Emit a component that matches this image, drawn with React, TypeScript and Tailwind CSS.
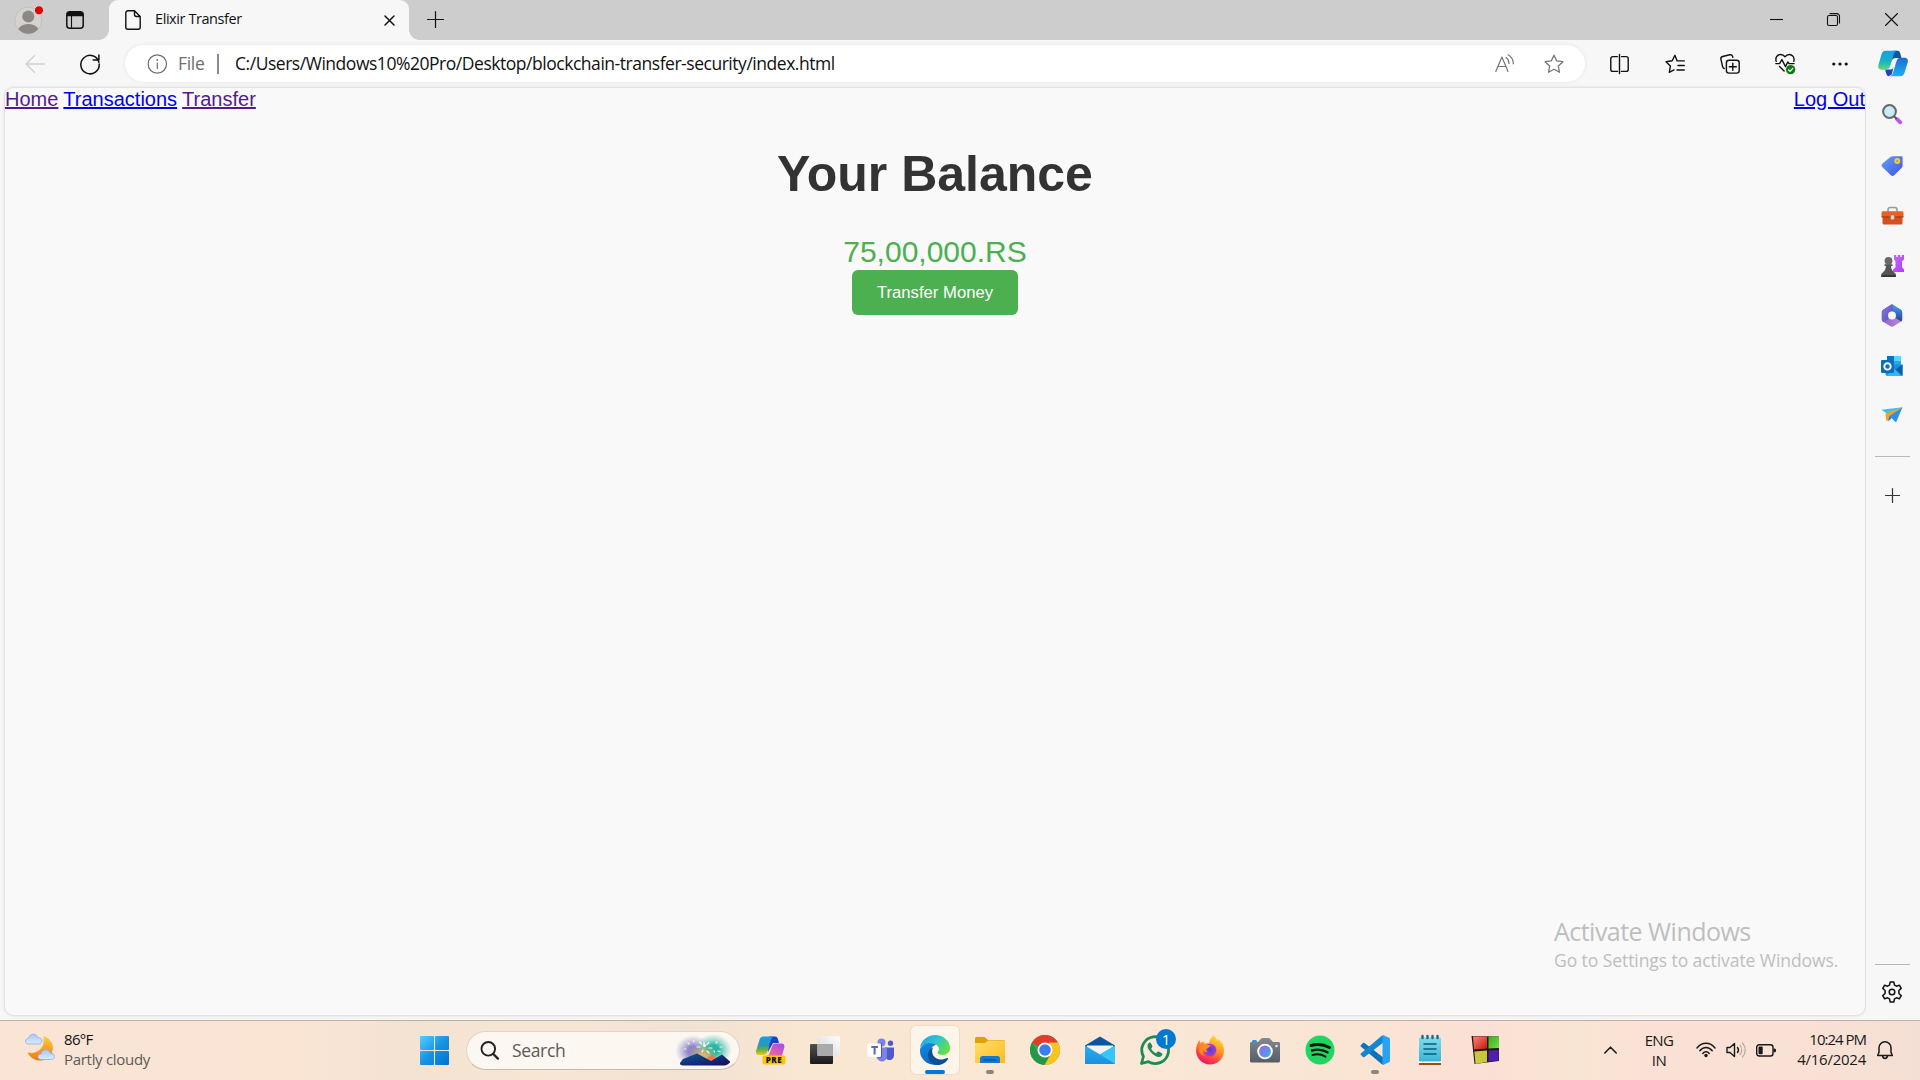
import React from "react";

type IconProps = { w: number; h: number; className?: string; children: React.ReactNode };

const Icon = ({ w, h, className = "", children }: IconProps) => (
  <svg
    width={w}
    height={h}
    viewBox={`0 0 ${w} ${h}`}
    fill="none"
    strokeLinecap="round"
    strokeLinejoin="round"
    className={`block shrink-0 overflow-visible ${className}`}
  >
    {children}
  </svg>
);

const STAR = "M10 1.2l2.7 5.7 6.2.8-4.6 4.3 1.2 6.3L10 15.2l-5.5 3.1L5.7 12 1.1 7.7l6.2-.8z";

/* ---------- Browser chrome ---------- */

const TabStrip = () => (
  <div className="flex h-[40px] bg-[#cdcdcd]">
    <div className="flex w-[109px] items-center rounded-br-[10px] pl-[14px]">
      <Icon w={29} h={29}>
        <defs>
          <clipPath id="avatar"><circle cx="14.3" cy="14.5" r="13.2" /></clipPath>
        </defs>
        <circle cx="14.3" cy="14.5" r="13.4" fill="#d5d3d0" stroke="#bdbbb8" strokeWidth="0.8" />
        <g clipPath="url(#avatar)" fill="#8b8885">
          <circle cx="14.3" cy="10.6" r="6" />
          <ellipse cx="14.3" cy="25" rx="10.5" ry="7" />
        </g>
        <circle cx="25" cy="4.3" r="4.6" fill="#e60000" stroke="#dedede" />
      </Icon>
      <Icon w={18} h={18} className="ml-[23px]">
        <rect x="0.8" y="0.8" width="16.4" height="16.4" rx="3" stroke="#111" strokeWidth="1.5" />
        <path d="M1 5.2V3a2 2 0 012-2h12a2 2 0 012 2v2.2z" fill="#111" />
        <path d="M5.5 5v12" stroke="#111" strokeWidth="1.1" />
      </Icon>
    </div>
    <div className="relative flex h-[40px] w-[300px] items-center rounded-t-[9px] bg-[#f7f7f7] pl-[16px]">
      <div className="absolute bottom-0 -left-[10px] h-[10px] w-[10px] bg-[radial-gradient(circle_at_0_0,#cdcdcd_9.5px,#f7f7f7_10px)]" />
      <div className="absolute -right-[10px] bottom-0 h-[10px] w-[10px] bg-[radial-gradient(circle_at_100%_0,#cdcdcd_9.5px,#f7f7f7_10px)]" />
      <Icon w={16} h={20}>
        <path d="M9.5 0.8H2.8a2 2 0 00-2 2v14.4a2 2 0 002 2h10.4a2 2 0 002-2V6.5zM9.5 1v3.5a2 2 0 002 2H15" stroke="#111" strokeWidth="1.4" />
      </Icon>
      <span className="mb-[2px] ml-[14px] w-[229px] text-[14.5px] leading-[20px] tracking-[-0.42px] text-[#111]">Elixir Transfer</span>
      <Icon w={11} h={11}>
        <path d="M1 1l9 9M10 1l-9 9" stroke="#111" strokeWidth="1.5" />
      </Icon>
    </div>
    <div className="flex flex-1 items-center pb-px pl-[18px]">
      <Icon w={17} h={17}>
        <path d="M8.5 0.5v16M0.5 8.5h16" stroke="#111" strokeWidth="1.2" />
      </Icon>
    </div>
    <div className="flex items-center pr-[22px] pb-px">
      <Icon w={13} h={13} className="mr-[44px]">
        <path d="M0 6.5h13" stroke="#111" strokeWidth="1.1" strokeLinecap="butt" />
      </Icon>
      <Icon w={13} h={13} className="mr-[45px]">
        <rect x="0.5" y="2.5" width="10" height="10" rx="1.5" stroke="#111" strokeWidth="1.1" />
        <path d="M3 .6h6.8a2.7 2.7 0 012.7 2.7V10" stroke="#111" strokeWidth="1.1" />
      </Icon>
      <Icon w={13} h={13}>
        <path d="M0.5 0.5l12 12M12.5 0.5l-12 12" stroke="#111" strokeWidth="1.1" />
      </Icon>
    </div>
  </div>
);

const Toolbar = () => (
  <div className="flex h-[47px] items-center bg-[#f7f7f7] pl-[25px]">
    <Icon w={20} h={18}>
      <path d="M9.5 0.8L1 9l8.5 8.2M1.2 9h18.3" stroke="#cfcfcf" strokeWidth="1.3" />
    </Icon>
    <Icon w={20} h={20} className="ml-[35px]">
      <path d="M18.9 8.2A9.2 9.2 0 1019.2 10M13.2 6h5.7V1" stroke="#111" strokeWidth="1.5" />
    </Icon>
    <div className="ml-[25px] flex h-[37px] w-[1460px] items-center rounded-full bg-white pl-[22px] shadow-[0_0_4px_rgba(0,0,0,0.08)]">
      <Icon w={20} h={20}>
        <circle cx="10.3" cy="10" r="9.2" stroke="#6e6e6e" strokeWidth="1.2" />
        <path d="M10.3 9v5.5" stroke="#6e6e6e" strokeWidth="1.2" />
        <circle cx="10.3" cy="6" r="0.9" fill="#6e6e6e" />
      </Icon>
      <span className="mb-[2px] ml-[11px] w-[39px] text-[17.5px] leading-[24px] tracking-[-0.3px] text-[#6e6e6e]">File</span>
      <div className="h-[20px] w-[2px] bg-[#8a8a8a]" />
      <span className="mb-[2px] ml-[16px] flex-1 whitespace-nowrap text-[17.5px] leading-[24px] tracking-[-0.465px] text-[#111]">
        C:/Users/Windows10%20Pro/Desktop/blockchain-transfer-security/index.html
      </span>
      <Icon w={20} h={19} className="mr-[29px]">
        <path d="M.8 17.5L6.9 3l6.1 14.5M3 12.5h7.8" stroke="#767676" strokeWidth="1.2" />
        <path d="M11 3.5c2 1.3 3 3.3 3 6M13 .8c3.3 1.7 5.3 4.8 5.3 9" stroke="#767676" strokeWidth="1.2" />
      </Icon>
      <Icon w={20} h={20} className="mr-[21px]">
        <path d={STAR} stroke="#767676" strokeWidth="1.3" />
      </Icon>
    </div>
    <Icon w={20} h={20} className="ml-[25px]">
      <path d="M7.5 2.6H2.8a2 2 0 00-2 2v10.8a2 2 0 002 2h4.7M11.5 2.6h4.7a2 2 0 012 2v10.8a2 2 0 01-2 2h-4.7M9.5.5v19" stroke="#111" strokeWidth="1.4" />
    </Icon>
    <Icon w={20} h={20} className="ml-[35px]">
      <path d="M13 6.9L12 6.7 9.9 1.3 7.2 6.7 1 7.7l4.4 4.4-1.1 6.2 4.7-2.4M13 6.9h6.3M13 11.5h6.3M12 16h7.3" stroke="#111" strokeWidth="1.4" />
    </Icon>
    <Icon w={20} h={20} className="ml-[35px]">
      <rect x="6.4" y="6.3" width="12.8" height="12.8" rx="2.6" stroke="#111" strokeWidth="1.4" />
      <path d="M12.8 9.2v7M9.3 12.7h7M4.2 14.5a2.5 2.5 0 01-1.6-1.8L.9 5.2a2.3 2.3 0 011.7-2.7l7.2-1.7a2.4 2.4 0 012.8 1.6l.2.9" stroke="#111" strokeWidth="1.4" />
    </Icon>
    <Icon w={20} h={21} className="ml-[35px]">
      <path d="M1.2 8.3C-.2 4 3 1.3 5.8 1.5c2 0 3.3 1.2 4.2 2.3.9-1.1 2.3-2.3 4.3-2.3 2.8 0 5.7 2.7 4.5 6.8M.8 10.6h3.8l2.3-4 3.6 7 2.3-4.6 1.3 1.6h5M4.5 13.5l4.6 4.5" stroke="#111" strokeWidth="1.4" />
      <circle cx="15.6" cy="16.6" r="4.7" fill="#107c10" />
      <path d="M13.5 16.8l1.5 1.5 2.8-3" stroke="#fff" strokeWidth="1.2" />
    </Icon>
    <Icon w={18} h={6} className="ml-[36px]">
      <g fill="#111">
        <circle cx="2.8" cy="3" r="1.6" /><circle cx="9" cy="3" r="1.6" /><circle cx="15.2" cy="3" r="1.6" />
      </g>
    </Icon>
    <Icon w={30} h={27} className="ml-[29px]">
      <defs>
        <linearGradient id="cpA" x1="0" y1="0" x2="0" y2="1"><stop stopColor="#1b9de2" /><stop offset="0.55" stopColor="#16b3c1" /><stop offset="1" stopColor="#63d57c" /></linearGradient>
        <linearGradient id="cpB" x1="0" y1="0" x2="0" y2="1"><stop stopColor="#2268d1" /><stop offset="1" stopColor="#18b4f5" /></linearGradient>
      </defs>
      <path d="M15 .8h4.500c1.700 0 2.300 1 2.700 2.400L23.500 8H18c-2.500 0-3.500 1-4.300 3z" fill="#0e579a" />
      <path d="M7 19.500h5.500c2 0 2.500-1 3.200-3l-2 8-3 1.700c-1.200-.2-2-1.200-2.400-2.500z" fill="#1d45c4" />
      <path d="M7.500.8H19c-1.800.3-2.700 1.800-3.300 3.700l-3.400 11.300C11.500 18.300 10 19.700 7.800 19.700H3.500C.8 19.700-.3 17.500.4 15L3.500 4.200C4.200 2 5.400.8 7.500.8z" fill="url(#cpA)" />
      <path d="M22.500 26.200H11.800c1.800-.3 2.700-1.800 3.300-3.700l3.200-10.700c.8-2.500 2.200-4 4.500-4h3.800c2.700 0 3.800 2.200 3.100 4.800l-3.200 10.200c-.7 2.200-1.900 3.400-4 3.400z" fill="url(#cpB)" />
    </Icon>
  </div>
);

/* ---------- Web page ---------- */

const Page = () => (
  <main className="ml-[4px] flex w-[1862px] flex-col overflow-hidden rounded-[10px] border border-[#e3e3e3] bg-[#f9f9f9] font-['Liberation_Sans',sans-serif] shadow-[0_0_3px_rgba(0,0,0,0.1)]">
    <nav className="flex h-[23px] justify-between text-[20px] leading-[23px]">
      <div className="flex gap-[5px]">
        <a className="text-[#551a8b] underline">Home</a>
        <a className="text-[#0000ee] underline">Transactions</a>
        <a className="text-[#551a8b] underline">Transfer</a>
      </div>
      <a className="text-[#0000ee] underline">Log Out</a>
    </nav>
    <div className="flex flex-col items-center pt-[35px]">
      <h1 className="text-[50px] leading-[57px] font-bold text-[#333]">Your Balance</h1>
      <p className="mt-[32px] text-[30px] leading-[34px] text-[#4caf50]">75,00,000.RS</p>
      <button className="mt-px h-[45px] w-[166px] rounded-[6px] bg-[#4caf50] text-[16.67px] text-white">Transfer Money</button>
    </div>
    <div className="mt-auto flex flex-col pb-[43px] pl-[1549px] font-['Open_Sans',sans-serif] whitespace-nowrap text-[#bebebe]">
      <span className="text-[25px] leading-[34px] tracking-[-0.530px]">Activate Windows</span>
      <span className="text-[17.5px] leading-[24px] tracking-[-0.070px]">Go to Settings to activate Windows.</span>
    </div>
  </main>
);

/* ---------- Edge sidebar ---------- */

const Cell = ({ children, className = "" }: { children: React.ReactNode; className?: string }) => (
  <div className={`flex h-[50px] w-full items-center justify-center ${className}`}>{children}</div>
);

const Sidebar = () => (
  <aside className="flex flex-1 flex-col items-center bg-[#f7f7f7] pt-[3px] pr-[2px]">
    <Cell className="pb-[2px]">
      <Icon w={20} h={20}>
        <path d="M15 15.2l3.300 3.100" stroke="#c94ff5" strokeWidth="3.800" />
        <path d="M12 12.2l2.2 2.2" stroke="#555" strokeWidth="2" />
        <circle cx="7.5" cy="7.5" r="6.4" fill="#c9ebfa" stroke="#686868" strokeWidth="2" />
      </Icon>
    </Cell>
    <Cell className="pt-px">
      <Icon w={22} h={22}>
        <defs><linearGradient id="tag" x1="0" y1="0" x2="1" y2="1"><stop stopColor="#64a5f5" /><stop offset="1" stopColor="#3f4fe8" /></linearGradient></defs>
        <path d="M12 1.3h8.3c.8 0 1.3.5 1.3 1.3v8.2c0 .8-.3 1.4-.8 1.9l-7.6 7.5c-1 1-2.3 1-3.3 0L1.3 12c-1-1-1-2.2 0-3.2l7.8-6.5c.8-.7 1.7-1 2.9-1z" fill="url(#tag)" />
        <circle cx="16.300" cy="6" r="2" fill="#8d90c0" stroke="#fbcc26" strokeWidth="1.900" />
      </Icon>
    </Cell>
    <Cell className="pt-[2px]">
      <Icon w={23} h={20}>
        <path d="M7 6V3.8C7 2.4 8 1.5 9.3 1.5h4.5c1.3 0 2.2.9 2.2 2.3V6" stroke="#999" strokeWidth="1.6" />
        <rect x="1.5" y="9" width="20" height="9.5" rx="1.5" fill="#d4501e" />
        <path d="M2 5.3h19c.8 0 1.5.7 1.5 1.5V11H.5V6.800c0-.8.7-1.500 1.500-1.500z" fill="#e4622a" />
        <path d="M.5 10.500h22v.9H.5z" fill="#8f2c11" />
        <rect x="9.700" y="9.200" width="3.600" height="4.200" rx="1" fill="#d2d2d2" />
      </Icon>
    </Cell>
    <Cell className="pt-px">
      <Icon w={23} h={24}>
        <defs><linearGradient id="rook" x1="0" y1="0" x2="1" y2="1"><stop stopColor="#c46cff" /><stop offset="1" stopColor="#b23af5" /></linearGradient></defs>
        <path d="M13 1h2.200v2h1.500V1h2.600v2h1.500V1H23v4.500l-2 1.700v6l2 2.300V18H12v-2.500l2.500-2.300v-6L13 5.500z" fill="url(#rook)" />
        <circle cx="7.500" cy="6.800" r="3.900" fill="#6a6a6a" />
        <path d="M3.500 10.300h8v1.800H10c.2 2.700 1 4.700 3 6.200l1.800 1.700v3H.3v-3L2 18.300c2-1.500 2.800-3.500 3-6.200H3.500z" fill="#555" />
        <path d="M.3 21h14.500v2H.3z" fill="#383838" />
      </Icon>
    </Cell>
    <Cell>
      <Icon w={22} h={23}>
        <defs>
          <linearGradient id="mA" x1="0" y1="0" x2="1" y2="1"><stop stopColor="#9a72d6" /><stop offset="1" stopColor="#3d55c4" /></linearGradient>
          <linearGradient id="mB" x1="0" y1="0" x2="0" y2="1"><stop stopColor="#41a6ee" /><stop offset="1" stopColor="#2b3e9b" /></linearGradient>
          <linearGradient id="mC" x1="0" y1="0" x2="1" y2="0"><stop stopColor="#8f62c2" /><stop offset="1" stopColor="#b98ae4" /></linearGradient>
        </defs>
        <path d="M11 .4l8.500 5c1.100.7 1.700 1.600 1.700 2.800v7c0 1.200-.6 2.100-1.700 2.800l-7 4.300c-1 .6-2 .6-3 0l-7-4.300C1.400 17.300.8 16.400.8 15.200v-7c0-1.200.6-2.100 1.700-2.800L9.500 1c.5-.3 1-.5 1.500-.6z" fill="url(#mC)" />
        <path d="M9.500 1c1-.6 2-.6 3 0l7 4.400c1.100.7 1.700 1.600 1.700 2.800v7c0 .9-.3 1.600-.9 2.200L14.500 14V9.500L8 5.500z" fill="url(#mB)" />
        <path d="M12 .7c-1-.4-1.700-.2-2.500.3l-7 4.400C1.400 6.100.8 7 .8 8.200v7c0 1.200.6 2.100 1.700 2.800l5-3V9.500L12.500 6z" fill="url(#mA)" />
        <circle cx="11" cy="11.500" r="3.900" fill="#f7f7f7" />
      </Icon>
    </Cell>
    <Cell className="pt-px">
      <Icon w={22} h={20}>
        <path d="M6 0h14v10H6z" fill="#28a8ea" />
        <path d="M6 0h7v5H6z" fill="#0b71c5" />
        <path d="M13 0h7v5h-7z" fill="#50d9ff" />
        <path d="M4.500 8.500H21.500V20h-15c-1 0-2-.8-2-2z" fill="#1490df" />
        <path d="M21.500 8.500l-7 5 7 6z" fill="#0a5ea8" />
        <path d="M5 20h15.500L13 13z" fill="#35b8f1" />
        <rect x="0" y="4" width="13" height="13" rx="1.200" fill="#0f6cbd" />
        <circle cx="6.500" cy="10.400" r="3.200" stroke="#fff" strokeWidth="1.900" />
      </Icon>
    </Cell>
    <Cell>
      <Icon w={22} h={16}>
        <path d="M.3 2.700L21.500.3 8.500 8z" fill="#3cc0f0" />
        <path d="M21.500.3L5.500 14.500 4.500 6.500z" fill="#f4a31d" />
        <path d="M21.500.3L8.500 9l6.500 6.500z" fill="#2a90ea" />
        <path d="M8.500 9L7 14.500l3.500-3.200z" fill="#2472c8" />
      </Icon>
    </Cell>
    <div className="mt-[16px] h-px w-[35px] bg-[#b8b8b8]" />
    <Icon w={15} h={15} className="mt-[31px]">
      <path d="M7.500.5v14M.5 7.500h14" stroke="#333" strokeWidth="1.200" />
    </Icon>
    <div className="mt-auto h-px w-[35px] bg-[#b8b8b8]" />
    <Icon w={22} h={22} className="mt-[16px] mb-[13px]">
      <path d="M9.200 1h3.600l.7 3.100 1.900 1.100 3-1 1.800 3.200-2.300 2.100v3l2.300 2.100-1.800 3.200-3-1-1.900 1.100-.7 3.100H9.200l-.7-3.100-1.900-1.100-3 1-1.800-3.200 2.300-2.100v-3L1.800 7.400l1.800-3.200 3 1 1.900-1.100z" stroke="#111" strokeWidth="1.500" />
      <circle cx="11" cy="11" r="2.800" stroke="#111" strokeWidth="1.500" />
    </Icon>
  </aside>
);

/* ---------- Taskbar ---------- */

const App55 = ({ children, active, running }: { children: React.ReactNode; active?: boolean; running?: boolean }) => (
  <div className="flex w-[55px] justify-center">
    <div className={`relative flex h-[48px] w-[48px] items-center justify-center rounded-[5px] ${active ? "bg-[#fdf4ea] shadow-[0_0_1px_1px_rgba(190,150,110,0.150)]" : ""}`}>
      {children}
      {active && <div className="absolute bottom-0 left-[14px] h-[4px] w-[20px] rounded-full bg-[#0078d4]" />}
      {running && <div className="absolute bottom-0 left-[20px] h-[4px] w-[8px] rounded-full bg-[#8d8378]" />}
    </div>
  </div>
);

const Cloud = ({ x, y }: { x: number; y: number }) => (
  <path transform={`translate(${x} ${y})`} d="M3.500 10.500C1.500 10.500.5 9.300.5 7.700.5 6 1.700 5 3.500 5 4 2.300 5.700.7 8.200.7c2.400 0 4 1.300 4.600 3.500 2.500-.2 4.200 1 4.200 3.200 0 2-1.300 3.100-3.300 3.100z" fill="url(#cloud)" stroke="#87aee8" strokeWidth="0.800" />
);

const Taskbar = () => (
  <footer className="flex h-[60px] border-t border-[#beb0a8] bg-[linear-gradient(90deg,#fae4d5_0%,#fae5d5_16%,#f4e3d2_21%,#f8e6d5_28%,#f2e2d2_36%,#f9e7d2_42%,#fae7d5_57%,#fae5d5_71%,#fbe0d5_77%,#f9e5d3_82%,#fbe1d5_86%,#fae1d5_94%,#f4dfd4_100%)] pb-px">
    <div className="flex w-[420px] items-center pl-[25px]">
      <Icon w={30} h={30} className="-mt-[4px]">
        <defs>
          <linearGradient id="moon" x1="0" y1="0" x2="0" y2="1"><stop stopColor="#f8cf3c" /><stop offset="1" stopColor="#ee7a16" /></linearGradient>
          <linearGradient id="cloud" x1="0" y1="0" x2="0" y2="1"><stop stopColor="#a9c7f5" /><stop offset="1" stopColor="#dcebfd" /></linearGradient>
        </defs>
        <path d="M18.500 3c7.500 3 11.300 9.500 8.500 16.500-2.500 6.500-9.200 9.500-16 7.500C7 25.700 4 23 2.500 19.500 11.500 21.500 20.500 16 18.500 3z" fill="url(#moon)" />
        <Cloud x={0} y={0.500} />
        <Cloud x={12.500} y={16} />
      </Icon>
      <div className="mb-[2px] ml-[9px] flex flex-col text-[15px] leading-[20px]">
        <span className="tracking-[-0.700px] text-[#111]">86°F</span>
        <span className="tracking-[-0.300px] text-[#5c5a58]">Partly cloudy</span>
      </div>
    </div>
    <div className="flex items-center">
      <Icon w={29} h={29}>
        <defs><linearGradient id="win" gradientUnits="userSpaceOnUse" x1="0" y1="0" x2="29" y2="29"><stop stopColor="#50d0ff" /><stop offset="0.500" stopColor="#1793e3" /><stop offset="1" stopColor="#0072d0" /></linearGradient></defs>
        <g fill="url(#win)">
          <rect width="14" height="14" rx="1" /><rect x="15" width="14" height="14" rx="1" />
          <rect y="15" width="14" height="14" rx="1" /><rect x="15" y="15" width="14" height="14" rx="1" />
        </g>
      </Icon>
      <div className="ml-[17px] flex h-[39px] w-[274px] items-center rounded-full border border-[#e3d3c5] border-b-[#c9b9ad] bg-[#fdf7f1] pl-[13px]">
        <Icon w={19} h={19}>
          <circle cx="8.300" cy="7.800" r="6.800" stroke="#222" strokeWidth="1.900" />
          <path d="M13.300 13l4.600 4.600" stroke="#222" strokeWidth="2.400" />
        </Icon>
        <span className="ml-[13px] w-[165px] text-[17.500px] leading-[24px] tracking-[-0.350px] text-[#5c5a58]">Search</span>
        <Icon w={54} h={31}>
          <defs>
            <radialGradient id="glowA"><stop offset="0.300" stopColor="#8d86c9" /><stop offset="1" stopColor="#a9a5dd" stopOpacity="0" /></radialGradient>
            <radialGradient id="glowB"><stop offset="0.300" stopColor="#25b8a4" /><stop offset="1" stopColor="#5fcabc" stopOpacity="0" /></radialGradient>
            <radialGradient id="glowC"><stop offset="0" stopColor="#f2b05a" /><stop offset="1" stopColor="#d9a962" stopOpacity="0" /></radialGradient>
            <linearGradient id="hill" x1="0" y1="0" x2="1" y2="1"><stop stopColor="#0d5a96" /><stop offset="1" stopColor="#15095f" /></linearGradient>
          </defs>
          <ellipse cx="16" cy="16" rx="18" ry="16" fill="url(#glowA)" />
          <ellipse cx="36" cy="15" rx="19" ry="16" fill="url(#glowB)" />
          <ellipse cx="26" cy="20" rx="15" ry="10" fill="url(#glowC)" />
          <path d="M28 24l7-4 6 4-6 4z" fill="#f2774a" />
          <path d="M3 28l3-4 14-5.500L34 26l11-6.500 8 7v1c-2 2-4 3-6 3H6c-2 0-3-1-3-2z" fill="url(#hill)" />
          <path d="M27 9.500v-2.500M30 9.500l2-2M24.500 9l-2-2M23 12h-3M32 13h3M30 16l2 2M26 15l-1 2M12 9l-1-1M17 7l-.5-1.500M9 14H7.500M39 8l1-1M43 12h2M41 16l2 .5M37 16l.5 1" stroke="#fff9dd" strokeWidth="1.200" />
          <circle cx="27.500" cy="10.500" r="1.500" fill="#fffbe8" />
        </Icon>
      </div>
    </div>
    <div className="ml-[2.500px] flex items-center">
      <App55>
        <Icon w={29} h={29}>
          <defs>
            <linearGradient id="preA" x1="0" y1="0" x2="0" y2="1"><stop stopColor="#139cf0" /><stop offset="0.500" stopColor="#2f9ba6" /><stop offset="0.750" stopColor="#72b53a" /><stop offset="1" stopColor="#f6c900" /></linearGradient>
            <linearGradient id="preB" x1="0" y1="1" x2="1" y2="0"><stop stopColor="#f7796a" /><stop offset="0.500" stopColor="#d258c4" /><stop offset="1" stopColor="#9a50ec" /></linearGradient>
          </defs>
          <path d="M13 .5h6c1.700 0 2.300.8 2.900 2.500L23 7h-6l-5 9z" fill="#1346c8" />
          <path d="M7.500.5H18c-2 .5-2.700 2-3.300 4l-3.200 10.700c-.8 2.500-2.200 3.800-4.500 3.800H3c-2.500 0-3.500-2-2.800-4.500L3.500 3.700C4.200 1.500 5.400.5 7.500.5z" fill="url(#preA)" />
          <path d="M19 7.500h6.500c2.500 0 3.500 2 2.700 4.500L25.800 20H10.500c1.800-.3 2.700-1.500 3.300-3.500L16 10.500c.6-2 1.500-3 3-3z" fill="url(#preB)" />
          <rect x="6.500" y="19.500" width="23" height="9" rx="2" fill="#fcc50b" />
          <text x="18" y="26.800" textAnchor="middle" fontFamily="Open Sans" fontWeight="800" fontSize="8" letterSpacing="0.500" fill="#111">PRE</text>
        </Icon>
      </App55>
      <App55>
        <Icon w={30} h={28}>
          <defs>
            <linearGradient id="tvA" x1="0" y1="0" x2="0" y2="1"><stop stopColor="#505050" /><stop offset="1" stopColor="#1a1a1a" /></linearGradient>
            <linearGradient id="tvB" x1="0" y1="1" x2="1" y2="0"><stop stopColor="#d4d4d4" /><stop offset="1" stopColor="#fff" /></linearGradient>
          </defs>
          <rect y="8" width="23" height="20" rx="1" fill="url(#tvA)" />
          <rect x="7.500" y="0.300" width="22.500" height="19.700" rx="1" fill="url(#tvB)" />
          <path d="M7.500 8H23v12H7.500z" fill="#aaa" />
        </Icon>
      </App55>
      <App55>
        <Icon w={27} h={24}>
          <circle cx="14.500" cy="4.500" r="4" fill="#7b83eb" />
          <circle cx="23.500" cy="5.300" r="2.700" fill="#5059c9" />
          <path d="M18 9.500h9v7.500c0 3-2 5-4.500 5S18 20 18 17z" fill="#5059c9" />
          <path d="M9.500 9.500H20v8c0 3.500-2 6-5 6s-5.500-2.500-5.500-6z" fill="#7b83eb" />
          <path d="M13 5.500h2v14h-5z" fill="#4b53bc" />
          <rect x="0.500" y="5.500" width="13.500" height="13.500" rx="1" fill="#fff" />
          <path d="M4.300 9h6.600M7.600 9v7.500" stroke="#5b62c4" strokeWidth="2" strokeLinecap="butt" />
        </Icon>
      </App55>
      <App55 active>
        <Icon w={30} h={30}>
          <defs>
            <linearGradient id="eA" x1="0" y1="0" x2="1" y2="0.600"><stop stopColor="#1f9de6" /><stop offset="0.500" stopColor="#2fc3d3" /><stop offset="1" stopColor="#62e142" /></linearGradient>
            <linearGradient id="eB" x1="0" y1="0" x2="0.500" y2="1"><stop stopColor="#1390e0" /><stop offset="1" stopColor="#0867c0" /></linearGradient>
          </defs>
          <path d="M0 13C1 5.500 7.500 0 15 0c8.500 0 15 6 15 13 0 4-3 7-7.300 7-3 0-5.200-1.300-5.200-2.500 0-.8 1.500-1.500 1.500-3.500 0-2.500-3-5.500-8-5.500C5.500 8.500 1.500 10.500 0 13z" fill="url(#eA)" />
          <path d="M0 14.500c1-4 5.500-6.500 10-6.500 2.500 0 4.500.7 6 1.800-3.500 1-6 4.500-6 9 0 5 4 9.500 9 10.500C10 32-1 25 0 14.500z" fill="url(#eB)" />
          <path d="M13 12.500c-2.500 5 .5 12 8 12 2 0 4.500-.6 6-1.500.8-.4 1.500.3 1 1C26 28 21 30.500 17 29.900 10.500 29 6.800 22.500 8.500 17.500 9.300 15 11 13 13 12.500z" fill="#0f4f98" />
        </Icon>
      </App55>
      <App55 running>
        <Icon w={30} h={26}>
          <defs><linearGradient id="fold" x1="0" y1="0" x2="1" y2="1"><stop stopColor="#ffdf6e" /><stop offset="1" stopColor="#fbbb1c" /></linearGradient></defs>
          <path d="M0 1.500C0 .7.700 0 1.500 0h8l3.500 3h15.500c.8 0 1.500.7 1.500 1.500V10H0z" fill="#e0a10b" />
          <path d="M0 6h10l3-2.500h17V26H0z" fill="url(#fold)" />
          <path d="M5 26v-4.500C5 20 6 19 7.500 19h15c1.500 0 2.500 1 2.500 2.500V26z" fill="#1379d2" />
          <path d="M9 23h12" stroke="#0b56a2" strokeWidth="1.500" />
        </Icon>
      </App55>
      <App55>
        <Icon w={30} h={30}>
          <circle cx="15" cy="15" r="15" fill="#34a853" />
          <path d="M15 15L2 7.500A15 15 0 0128 7.500z" fill="#e33b2e" />
          <path d="M15 15L2 7.500A15 15 0 0015 0z" fill="#e33b2e" />
          <path d="M2 7.500A15 15 0 0014.500 30L21 18.500 15 15 8.500 18.500z" fill="#259745" />
          <path d="M28 7.500A15 15 0 0114.500 30L21.500 18 19 7.500z" fill="#fcc31e" />
          <circle cx="15" cy="15" r="7.500" fill="#fff" />
          <circle cx="15" cy="15" r="5.800" fill="#3b7ded" />
        </Icon>
      </App55>
      <App55>
        <Icon w={30} h={28}>
          <defs><linearGradient id="mail" x1="0" y1="0" x2="0" y2="1"><stop stopColor="#29b0ef" /><stop offset="1" stopColor="#1b8fe0" /></linearGradient></defs>
          <path d="M0 9.500L15 .5l15 9V18H0z" fill="#0b56a0" />
          <path d="M2 9.500h26V20H2z" fill="#f3f3f5" />
          <path d="M0 9.500l15 9 15-9V28H0z" fill="url(#mail)" />
          <path d="M30 9.500l-15 9L30 28z" fill="#37c5f5" />
        </Icon>
      </App55>
      <App55>
        <Icon w={30} h={30}>
          <path d="M1.500 28.500l1.900-7A13.400 13.400 0 118.400 26.700z" fill="#fae9dc" stroke="#1f8a57" strokeWidth="2.800" />
          <path d="M10 7.500c-.7-.2-2.500 1-2.500 3.500 0 2 1.300 4 3.300 6.200 2.700 3 5.700 4.800 8.200 4.800 2 0 3.300-1.500 3.400-3 0-.7-3.400-2.500-4.200-2.500-.9 0-1.500 1.700-2.200 1.700-.8 0-4.500-3-4.800-4.500 0-.6 1.300-1.400 1.200-2.200 0-.6-1.500-3.900-2.400-4z" fill="#1f8a57" />
        </Icon>
        <div className="absolute top-[3px] left-[25px] flex h-[20px] w-[20px] items-center justify-center rounded-full bg-[#0078d4] text-[15px] leading-[20px] text-white">1</div>
      </App55>
      <App55>
        <Icon w={30} h={30}>
          <defs>
            <linearGradient id="ffA" x1="0.800" y1="0" x2="0.300" y2="1"><stop stopColor="#ffe63d" /><stop offset="0.400" stopColor="#ff9a20" /><stop offset="0.750" stopColor="#ff3f47" /><stop offset="1" stopColor="#e5136f" /></linearGradient>
            <radialGradient id="ffB"><stop stopColor="#5b3dc4" /><stop offset="1" stopColor="#a43ed8" /></radialGradient>
          </defs>
          <path d="M18.500.5c2 2 3 3 4 5.500 0 0 1-.5 1-2C27.500 7.500 29 11.500 29 15.500 29 23.500 23 29.500 15 29.500S1 23 1 15.500C1 11.500 2.500 7.500 4.500 5l1 3.200c.8-.8 2-1.500 3.200-1.700L9 8.500l5-.5c1-3.500 2-6 4.500-7.500z" fill="url(#ffA)" />
          <circle cx="15" cy="15" r="6.300" fill="url(#ffB)" />
          <path d="M4 11c3-3 6-2.500 8-1.500 1 .5 3 .5 3.500 1.200-.5 1.800-3 2-4 3.300-.8 1.200 0 2 1.200 2.200C11.500 18 9 17 8.500 15 7 17 8 20 10 21.500 5.500 20 2.500 16 4 11z" fill="#ff8a1d" />
        </Icon>
      </App55>
      <App55>
        <Icon w={30} h={25}>
          <defs>
            <linearGradient id="cam" x1="0" y1="0" x2="0" y2="1"><stop stopColor="#828990" /><stop offset="1" stopColor="#555c63" /></linearGradient>
            <linearGradient id="lens" x1="0" y1="0" x2="1" y2="1"><stop stopColor="#a45fe0" /><stop offset="1" stopColor="#30b4f4" /></linearGradient>
          </defs>
          <path d="M2 5V3.500C2 2.700 2.700 2 3.500 2h2C6.300 2 7 2.700 7 3.500V5z" fill="#1a9be8" />
          <path d="M0 5.500C0 4.700.7 4 1.500 4H8l3-3.300c.4-.4.9-.7 1.500-.7h6c.6 0 1 .3 1.500.7L23 4h5.500c.8 0 1.500.7 1.500 1.500V23c0 .8-.7 1.500-1.500 1.500h-27C.7 24.500 0 23.800 0 23z" fill="url(#cam)" />
          <circle cx="15" cy="13.500" r="7.800" fill="#fff" />
          <circle cx="15" cy="13.500" r="5.900" fill="url(#lens)" />
          <circle cx="26.500" cy="8" r="1.300" fill="#e3e6e9" />
        </Icon>
      </App55>
      <App55>
        <Icon w={30} h={30}>
          <circle cx="15" cy="15" r="14.500" fill="#1fd760" />
          <path d="M6 10.500c6-1.700 13-1 18.500 2" stroke="#111" strokeWidth="2.900" />
          <path d="M7 15.500c5-1.500 11-.8 15.500 1.800" stroke="#111" strokeWidth="2.400" />
          <path d="M7.500 20c4.500-1.200 9-.7 13 1.600" stroke="#111" strokeWidth="2" />
        </Icon>
      </App55>
      <App55 running>
        <Icon w={30} h={30}>
          <path d="M1 10l2-2c.5-.5 1-.4 1.500 0L24 23v6.500L21.500 29 .8 11.600C.3 11 .4 10.500 1 10z" fill="#0d72b8" />
          <path d="M1 20l2 2c.5.5 1 .4 1.500 0L24 7V.5L21.500 1 .8 18.400c-.5.600-.4 1.100.2 1.600z" fill="#1186d1" />
          <path d="M21.500 1c.5-.7 1.300-1 2-.7l5 2.200c.9.400 1.500 1 1.500 2v21c0 1-.6 1.600-1.500 2l-5 2.200c-.7.300-1.500 0-2-.7l1 .3V.7z" fill="#28a3f2" />
        </Icon>
      </App55>
      <App55>
        <Icon w={22} h={30}>
          <defs><linearGradient id="note" x1="0" y1="0" x2="0" y2="1"><stop stopColor="#7fdcec" /><stop offset="1" stopColor="#3bb5d6" /></linearGradient></defs>
          <path d="M0 25h22v5H0z" fill="#a44a0c" />
          <path d="M0 25h22v3H0z" fill="#fff" />
          <rect y="2.500" width="22" height="24" rx="1" fill="url(#note)" />
          <path d="M4.500 9h13M4.500 14h13M4.500 19h13" stroke="#0b5c78" strokeWidth="1.700" strokeLinecap="butt" />
          <path d="M3.500 1v2M8.500 1v2M13.500 1v2M18.500 1v2" stroke="#1b6a85" strokeWidth="2.400" />
        </Icon>
      </App55>
      <App55>
        <Icon w={29} h={30}>
          <defs>
            <linearGradient id="bR" x1="0" y1="0" x2="1" y2="1"><stop stopColor="#ff8375" /><stop offset="1" stopColor="#c3170d" /></linearGradient>
            <linearGradient id="bG" x1="0" y1="0" x2="1" y2="1"><stop stopColor="#3caf25" /><stop offset="1" stopColor="#72de48" /></linearGradient>
          </defs>
          <path d="M.5 1L28 1.500V26L3.500 29 2 15z" fill="#251512" />
          <path d="M2 1.500h14v12L3 14.500z" fill="url(#bR)" />
          <path d="M17.500 1.500H28v11.500l-10.500.5z" fill="url(#bG)" />
          <path d="M3.300 16.500l12.700-1v11.500L4.500 29z" fill="#c8c83c" />
          <path d="M17.500 15.500L27.700 15v10.500l-10.200 1.300z" fill="#4c1fae" />
        </Icon>
      </App55>
    </div>
    <div className="ml-auto flex items-center text-[15px] leading-[20px] text-[#1a1a1a]">
      <Icon w={13} h={8}>
        <path d="M.8 7l5.700-5.800L12.200 7" stroke="#1a1a1a" strokeWidth="1.600" />
      </Icon>
      <div className="mb-px ml-[22px] flex w-[40px] flex-col items-center tracking-[-0.600px]">
        <span>ENG</span>
        <span>IN</span>
      </div>
      <Icon w={20} h={16} className="ml-[17px]">
        <path d="M1 6C6-.2 14-.2 19 6M3.800 8.700c3.500-4.300 8.900-4.300 12.400 0M6.800 11.500c1.800-2.200 4.600-2.200 6.400 0" stroke="#1a1a1a" strokeWidth="1.500" />
        <circle cx="10" cy="13.500" r="1.700" fill="#1a1a1a" />
      </Icon>
      <Icon w={20} h={16} className="ml-[10px]">
        <path d="M1 5.500h3L8.500 1.500v13L4 10.500H1z" stroke="#1a1a1a" strokeWidth="1.400" />
        <path d="M11.500 5.500c1.200 1.500 1.200 3.500 0 5" stroke="#1a1a1a" strokeWidth="1.400" />
        <path d="M14 3.300c2.300 2.700 2.300 6.700 0 9.400M16.500 1c3.600 4 3.600 10 0 14" stroke="#b9aba2" strokeWidth="1.200" />
      </Icon>
      <Icon w={20} h={13} className="ml-[10px]">
        <rect x="0.700" y="0.700" width="16.300" height="11.300" rx="2.500" stroke="#1a1a1a" strokeWidth="1.400" />
        <rect x="2.500" y="2.500" width="4.200" height="7.700" rx="1" fill="#1a1a1a" />
        <path d="M17.500 4.500h1c1 0 1.500.7 1.500 1.900s-.5 1.900-1.500 1.900h-1z" fill="#1a1a1a" />
      </Icon>
      <div className="mb-[2px] flex w-[90px] flex-col items-end whitespace-nowrap">
        <span className="tracking-[-1px]">10:24 PM</span>
        <span className="tracking-[-0.250px]">4/16/2024</span>
      </div>
      <Icon w={16} h={19} className="mr-[27px] ml-[11px]">
        <path d="M8 .8a6 6 0 016 6v4.500l1.300 3.200H.7L2 11.300V6.800a6 6 0 016-6zM5.500 15c.3 1.500 1.200 2.400 2.500 2.400s2.200-.9 2.500-2.400" stroke="#1a1a1a" strokeWidth="1.500" />
      </Icon>
    </div>
  </footer>
);

export default function App() {
  return (
    <div className="flex h-[1080px] w-[1920px] flex-col overflow-hidden bg-[#f7f7f7] font-['Open_Sans',sans-serif]">
      <TabStrip />
      <Toolbar />
      <div className="flex h-[929px]">
        <Page />
        <Sidebar />
      </div>
      <div className="h-[4px]" />
      <Taskbar />
    </div>
  );
}
